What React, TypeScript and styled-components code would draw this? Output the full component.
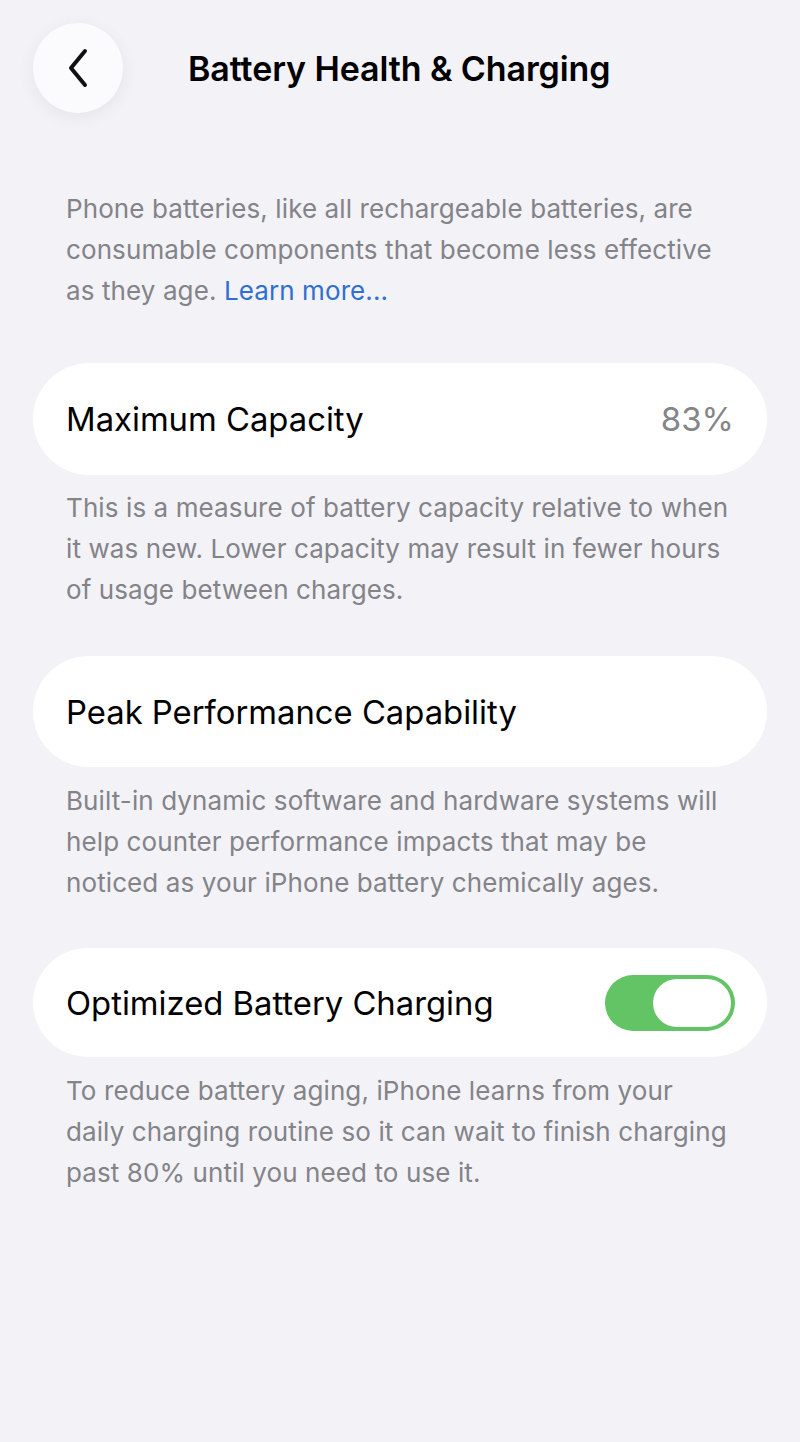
import React from "react";
import styled, { createGlobalStyle } from "styled-components";

const Global = createGlobalStyle`
  html, body { margin: 0; padding: 0; background: #f2f2f7; }
  body { font-family: Inter, "Noto Sans", sans-serif; -webkit-font-smoothing: antialiased; }
`;

const Page = styled.div`
  width: 800px;
  min-height: 1442px;
  background: #f2f2f7;
  display: flex;
  flex-direction: column;
  box-sizing: border-box;
  padding: 23px 33px 0 33px;
`;

const Header = styled.header`
  display: flex;
  align-items: center;
  gap: 65px;
  height: 90px;
`;

const BackButton = styled.button`
  width: 90px;
  height: 90px;
  border-radius: 50%;
  border: none;
  background: #fbfbfd;
  box-shadow: 0 4px 18px rgba(0, 0, 0, 0.06);
  display: flex;
  align-items: center;
  justify-content: center;
  padding: 0;
  cursor: pointer;
`;

const Title = styled.h1`
  margin: 0;
  font-size: 34px;
  font-weight: 600;
  color: #000;
  letter-spacing: -0.1px;
`;

const Note = styled.p<{ $top: number }>`
  margin: ${(p) => p.$top}px 0 0 0;
  padding: 0 33px;
  font-size: 26px;
  line-height: 41px;
  color: #838388;
  letter-spacing: 0.1px;
  white-space: nowrap;
`;

const Link = styled.a`
  color: #2f6fd0;
  text-decoration: none;
`;

const Card = styled.div<{ $top: number; $h: number }>`
  margin-top: ${(p) => p.$top}px;
  height: ${(p) => p.$h}px;
  border-radius: 56px;
  background: #ffffff;
  display: flex;
  align-items: center;
  justify-content: space-between;
  padding: 0 33px;
`;

const Label = styled.span`
  font-size: 32.8px;
  color: #000;
`;

const Value = styled.span`
  font-size: 33px;
  color: #858589;
`;

const Toggle = styled.div`
  width: 130px;
  height: 56px;
  border-radius: 28px;
  background: #62c465;
  box-sizing: border-box;
  padding: 4px;
  display: flex;
  justify-content: flex-end;
  margin-right: -1px;
`;

const Thumb = styled.div`
  width: 78px;
  height: 48px;
  border-radius: 24px;
  background: #fff;
`;

export default function App() {
  return (
    <>
      <Global />
      <Page>
        <Header>
          <BackButton aria-label="Back">
            <svg width="28" height="40" viewBox="0 0 28 40" fill="none">
              <path
                d="M21 3 L7 20 L21 37"
                stroke="#111"
                strokeWidth="4"
                strokeLinecap="round"
                strokeLinejoin="round"
              />
            </svg>
          </BackButton>
          <Title>Battery Health &amp; Charging</Title>
        </Header>

        <Note $top={75}>
          Phone batteries, like all rechargeable batteries, are
          <br />
          consumable components that become less effective
          <br />
          as they age. <Link href="#">Learn more...</Link>
        </Note>

        <Card $top={52} $h={112}>
          <Label>Maximum Capacity</Label>
          <Value>83%</Value>
        </Card>
        <Note $top={12}>
          This is a measure of battery capacity relative to when
          <br />
          it was new. Lower capacity may result in fewer hours
          <br />
          of usage between charges.
        </Note>

        <Card $top={46} $h={111}>
          <Label>Peak Performance Capability</Label>
        </Card>
        <Note $top={13}>
          Built-in dynamic software and hardware systems will
          <br />
          help counter performance impacts that may be
          <br />
          noticed as your iPhone battery chemically ages.
        </Note>

        <Card $top={45} $h={109}>
          <Label>Optimized Battery Charging</Label>
          <Toggle>
            <Thumb />
          </Toggle>
        </Card>
        <Note $top={13}>
          To reduce battery aging, iPhone learns from your
          <br />
          daily charging routine so it can wait to finish charging
          <br />
          past 80% until you need to use it.
        </Note>
      </Page>
    </>
  );
}
